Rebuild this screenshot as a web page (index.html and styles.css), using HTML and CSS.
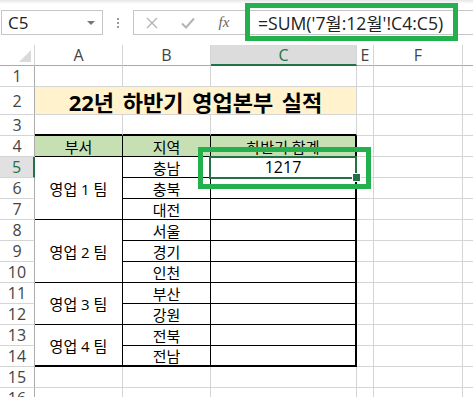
FILE: index.html
```html
<!DOCTYPE html>
<html lang="ko">
<head>
	<meta charset="UTF-8" />
	<title>22년 하반기 영업본부 실적</title>
	<link rel="stylesheet" href="styles.css">
</head>
<body>
	<div class="app">
		<!-- 수식 입력줄 -->
		<div class="toolbar">
			<div class="namebox"><span>C5</span><i class="arrow"></i></div>
			<div class="grip"><i></i><i></i><i></i></div>
			<div class="fbar">
				<span class="fbtn">
					<svg width="12" height="12" viewBox="0 0 12 12"><path d="M1 1L11 11M11 1L1 11" stroke="#b4b4b4" stroke-width="1.4" fill="none"/></svg>
				</span>
				<span class="fbtn">
					<svg width="14" height="12" viewBox="0 0 14 12"><path d="M1 6.5L5 10.5L13 1.5" stroke="#b4b4b4" stroke-width="2" fill="none"/></svg>
				</span>
				<span class="fbtn fx">fx</span>
				<div class="formula">=SUM('7월:12월'!C4:C5)</div>
			</div>
		</div>
		<!-- END of 수식 입력줄 -->

		<!-- 시트 -->
		<div class="sheet">
			<div class="corner"><i></i></div>
			<div class="hd">A</div>
			<div class="hd">B</div>
			<div class="hd sel">C</div>
			<div class="hd">E</div>
			<div class="hd">F</div>
			<div class="hd"></div>

			<div class="rh">1</div>
			<div></div><div></div><div></div><div></div><div></div><div></div>

			<div class="rh">2</div>
			<div class="title">22년 하반기 영업본부 실적</div>
			<div></div><div></div><div></div>

			<div class="rh">3</div>
			<div class="t-top"></div><div class="t-top"></div><div class="t-top"></div>
			<div></div><div></div><div></div>

			<div class="rh">4</div>
			<div class="t head">부서</div>
			<div class="t head">지역</div>
			<div class="t t-end head">하반기 합계</div>
			<div></div><div></div><div></div>

			<div class="rh sel">5</div>
			<div class="t team3">영업 1 팀</div>
			<div class="t">충남</div>
			<div class="t t-end active">1217</div>
			<div></div><div></div><div></div>

			<div class="rh">6</div>
			<div class="t">충북</div>
			<div class="t t-end"></div>
			<div></div><div></div><div></div>

			<div class="rh">7</div>
			<div class="t">대전</div>
			<div class="t t-end"></div>
			<div></div><div></div><div></div>

			<div class="rh">8</div>
			<div class="t team3">영업 2 팀</div>
			<div class="t">서울</div>
			<div class="t t-end"></div>
			<div></div><div></div><div></div>

			<div class="rh">9</div>
			<div class="t">경기</div>
			<div class="t t-end"></div>
			<div></div><div></div><div></div>

			<div class="rh">10</div>
			<div class="t">인천</div>
			<div class="t t-end"></div>
			<div></div><div></div><div></div>

			<div class="rh">11</div>
			<div class="t team2">영업 3 팀</div>
			<div class="t">부산</div>
			<div class="t t-end"></div>
			<div></div><div></div><div></div>

			<div class="rh">12</div>
			<div class="t">강원</div>
			<div class="t t-end"></div>
			<div></div><div></div><div></div>

			<div class="rh">13</div>
			<div class="t team2 t-last">영업 4 팀</div>
			<div class="t">전북</div>
			<div class="t t-end"></div>
			<div></div><div></div><div></div>

			<div class="rh">14</div>
			<div class="t t-last">전남</div>
			<div class="t t-end t-last"></div>
			<div></div><div></div><div></div>

			<div class="rh">15</div>
			<div></div><div></div><div></div><div></div><div></div><div></div>

			<div class="rh">16</div>
			<div></div><div></div><div></div><div></div><div></div><div></div>
		</div>
		<!-- END of 시트 -->

		<!-- 강조 표시 -->
		<div class="mark mark-formula"></div>
		<div class="mark mark-cell"></div>
	</div>
</body>
</html>
```

FILE: styles.css
```css
* {
	margin: 0;
	padding: 0;
	box-sizing: border-box;
}

html,
body {
	width: 473px;
	height: 397px;
	overflow: hidden;
	background-color: #fff;
}

body {
	font-family: "Open Sans", "Noto Sans CJK KR", sans-serif;
	color: #000;
}

.app {
	position: relative;
	width: 473px;
	height: 397px;
	overflow: hidden;
}

/* 수식 입력줄 */
.toolbar {
	height: 45px;
	display: flex;
	align-items: flex-start;
	padding: 10px 0 0 1px;
	background: linear-gradient(#e6e6e6, #fff 4px);
}

.namebox {
	width: 102px;
	height: 25px;
	border: 1px solid #c6c6c6;
	display: flex;
	align-items: center;
	justify-content: space-between;
	padding: 0 7px 0 6px;
	font-size: 17px;
	color: #222;
	background-color: #fff;
}

.namebox .arrow {
	width: 0;
	height: 0;
	border-left: 4px solid transparent;
	border-right: 4px solid transparent;
	border-top: 4px solid #777;
}

.grip {
	width: 30px;
	height: 25px;
	display: flex;
	flex-direction: column;
	align-items: center;
	justify-content: center;
	gap: 2px;
}

.grip i {
	width: 2px;
	height: 2px;
	background-color: #9a9a9a;
}

.fbar {
	flex: 1;
	height: 25px;
	border: 1px solid #c6c6c6;
	border-right: none;
	display: flex;
	align-items: center;
	background-color: #fff;
}

.fbtn {
	width: 36px;
	display: flex;
	justify-content: center;
	align-items: center;
}

.fx {
	font-family: "Liberation Serif", serif;
	font-style: italic;
	font-size: 15px;
	color: #666;
}

.formula {
	flex: 1;
	padding-left: 16px;
	font-size: 17.6px;
	color: #222;
	white-space: nowrap;
}

/* 시트 */
.sheet {
	display: grid;
	grid-template-columns: 35px 88px 88px 146px 17px 89px 80px;
	grid-template-rows: 21px 21px 28px repeat(14, 21px);
}

.sheet > div {
	border-right: 1px solid #d4d4d4;
	border-bottom: 1px solid #d4d4d4;
	display: flex;
	align-items: center;
	justify-content: center;
	font-size: 15px;
	white-space: nowrap;
	overflow: hidden;
}

.corner {
	position: relative;
	border-bottom-color: #ababab !important;
}

.corner i {
	position: absolute;
	right: 3px;
	bottom: 3px;
	width: 0;
	height: 0;
	border-left: 12px solid transparent;
	border-bottom: 12px solid #dadada;
}

.hd {
	font-size: 16px !important;
	color: #444;
	border-bottom-color: #ababab !important;
}

.rh {
	font-size: 16px !important;
	color: #444;
	border-right-color: #ababab !important;
}

.hd.sel {
	background-color: #dcdcdc;
	color: #217346;
	border-bottom: 2px solid #217346 !important;
}

.rh.sel {
	background-color: #e1e1e1;
	color: #217346;
	border-right: 2px solid #217346 !important;
}

.title {
	grid-column: span 3;
	background-color: #fff2cc;
	font-size: 22px !important;
	font-weight: bold;
	word-spacing: 3px;
}

/* 표 테두리 */
.sheet > .t {
	border-right-color: #000;
	border-bottom-color: #000;
}

.sheet > .t-top {
	border-bottom: 2px solid #000;
}

.sheet > .t-end {
	border-right: 2px solid #000;
}

.sheet > .t-last {
	border-bottom: 2px solid #000;
}

.head {
	background-color: #c6e0b4;
}

.team3 {
	grid-row: span 3;
}

.team2 {
	grid-row: span 2;
}

/* 선택된 셀 */
.sheet > .active {
	position: relative;
	overflow: visible;
	z-index: 1;
	font-size: 16px;
}

.active::after {
	content: "";
	position: absolute;
	left: -2px;
	top: -1px;
	right: -2px;
	bottom: -2px;
	border: 2px solid #217346;
}

.active::before {
	content: "";
	position: absolute;
	right: -6px;
	bottom: -5px;
	width: 7px;
	height: 7px;
	background-color: #217346;
	border: 1px solid #fff;
	z-index: 2;
}

/* 강조 표시 */
.mark {
	position: absolute;
	border: 5px solid #22b14c;
	z-index: 5;
}

.mark-formula {
	left: 245px;
	top: 3px;
	width: 213px;
	height: 38px;
}

.mark-cell {
	left: 198px;
	top: 147px;
	width: 173px;
	height: 42px;
}
```
